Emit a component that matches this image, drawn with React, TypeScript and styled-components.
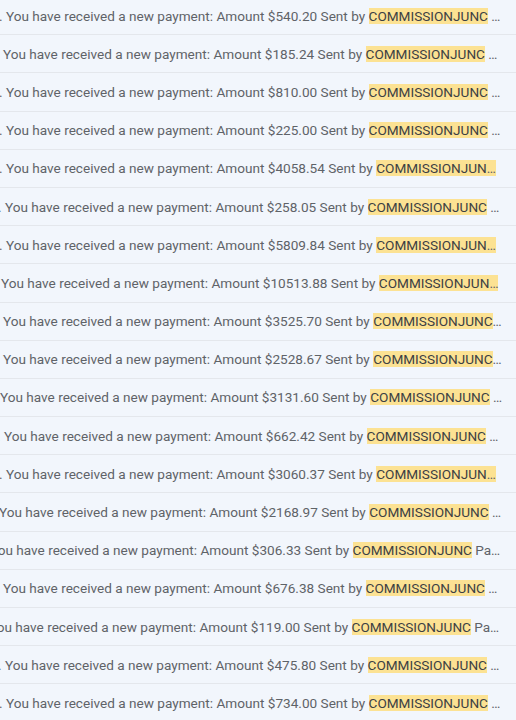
import styled, { createGlobalStyle } from 'styled-components';

const GlobalStyle = createGlobalStyle`
  html, body {
    margin: 0;
    padding: 0;
    background: #f2f6fc;
    overflow: hidden;
  }
`;

const List = styled.div`
  display: flex;
  flex-direction: column;
  width: 516px;
  margin-top: -3px;
`;

const Row = styled.div`
  display: flex;
  align-items: center;
  height: 38.2px;
  box-sizing: border-box;
  border-bottom: 1px solid #e4e7ec;
  overflow: hidden;
`;

const Snippet = styled.div<{ $shift: number }>`
  flex: none;
  width: ${p => 503 + p.$shift}px;
  margin-left: ${p => -p.$shift}px;
  white-space: nowrap;
  overflow: hidden;
  text-overflow: ellipsis;
  font-family: Roboto, 'Noto Sans', sans-serif;
  font-size: 13.6px;
  color: #5f6368;
`;

const Mark = styled.span`
  background: #fce293;
  color: #3c4043;
  padding: 1px 0;
`;

type payment = {
  amount: string;
  shift: number;
};

const payments: payment[] = [
  { amount: '540.20', shift: 1 },
  { amount: '185.24', shift: 4 },
  { amount: '810.00', shift: 1 },
  { amount: '225.00', shift: 1 },
  { amount: '4058.54', shift: 1 },
  { amount: '258.05', shift: 2 },
  { amount: '5809.84', shift: 1 },
  { amount: '10513.88', shift: 6 },
  { amount: '3525.70', shift: 4 },
  { amount: '2528.67', shift: 4 },
  { amount: '3131.60', shift: 7 },
  { amount: '662.42', shift: 3 },
  { amount: '3060.37', shift: 1 },
  { amount: '2168.97', shift: 8 },
  { amount: '306.33', shift: 17 },
  { amount: '676.38', shift: 4 },
  { amount: '119.00', shift: 18 },
  { amount: '475.80', shift: 2 },
  { amount: '734.00', shift: 1 },
];

const App = () => {
  return (
    <>
      <GlobalStyle />
      <List>
        {payments.map((item, i) => (
          <Row key={i}>
            <Snippet $shift={item.shift}>
              {`. You have received a new payment: Amount $${item.amount} Sent by `}
              <Mark>COMMISSIONJUNC</Mark>
              {' Payment ID: 00'}
              {i}
            </Snippet>
          </Row>
        ))}
      </List>
    </>
  );
};

export default App;
